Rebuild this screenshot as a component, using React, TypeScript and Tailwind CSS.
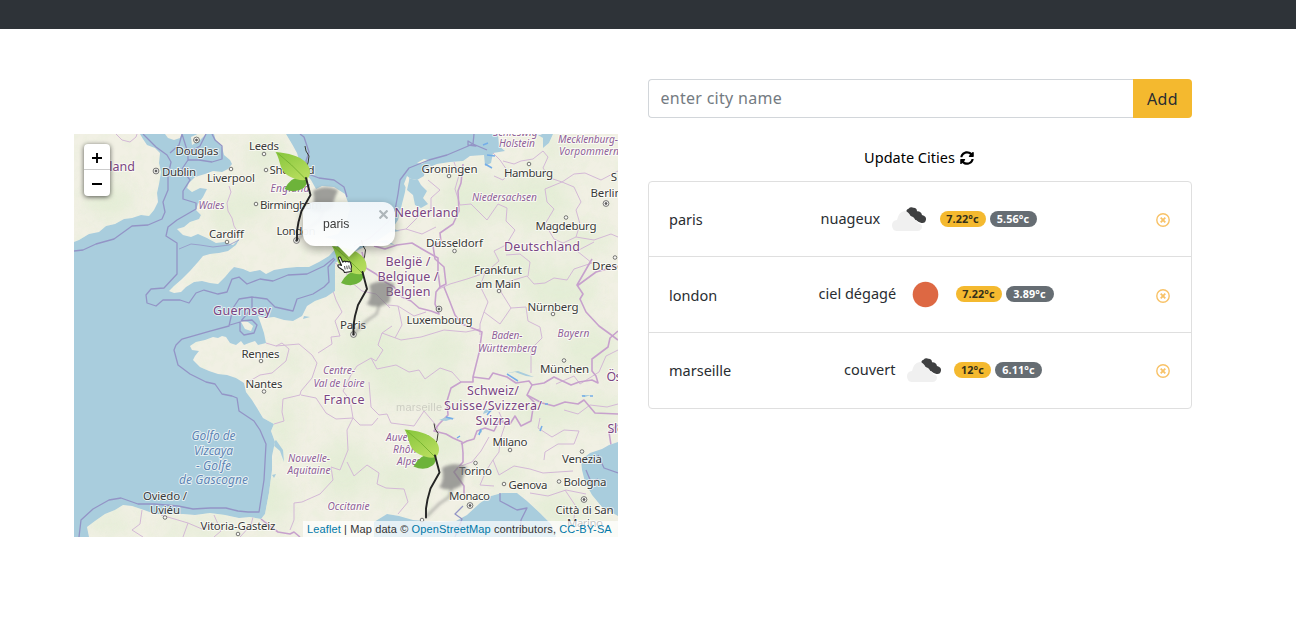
import React from "react";
import { FaSyncAlt } from "react-icons/fa";

type Kind = "city" | "country" | "region" | "sea";
type Label = [text: string, x: number, y: number, width: number, kind: Kind];

const labels: Label[] = [
  ["Douglas", 197, 155, 43, "city"],
  ["Leeds", 264, 150, 30, "city"],
  ["Dublin", 179, 176, 34, "city"],
  ["Liverpool", 231, 182, 48, "city"],
  ["Sheffield", 292, 174, 45, "city"],
  ["Birmingham", 291, 208.5, 62, "city"],
  ["Cardiff", 226.5, 237.5, 35, "city"],
  ["London", 296, 234.5, 39, "city"],
  ["Paris", 353, 329, 26, "city"],
  ["Rennes", 260.5, 357.5, 38, "city"],
  ["Nantes", 264, 388, 37, "city"],
  ["Oviedo /", 165, 500, 44, "city"],
  ["Uviéu", 165, 514, 30, "city"],
  ["Vitoria-Gasteiz", 238, 530, 75, "city"],
  ["Groningen", 449.5, 172.5, 56, "city"],
  ["Hamburg", 528.5, 176.5, 49, "city"],
  ["S", 614, 181, 6, "city"],
  ["Berlin", 606, 197, 31, "city"],
  ["Magdeburg", 566, 230, 61, "city"],
  ["Düsseldorf", 454.5, 247, 57, "city"],
  ["Frankfurt", 498, 274, 48, "city"],
  ["am Main", 498, 287.5, 45, "city"],
  ["Dresden", 615, 270, 46, "city"],
  ["Nürnberg", 553, 311, 51, "city"],
  ["Luxembourg", 439.5, 324, 66, "city"],
  ["München", 564.5, 373, 49, "city"],
  ["Milano", 510, 446, 35, "city"],
  ["Torino", 475.5, 475, 33, "city"],
  ["Monaco", 469.5, 500, 41, "city"],
  ["Genova", 528, 488.5, 39, "city"],
  ["Venezia", 582, 463, 40, "city"],
  ["Bologna", 585, 486, 43, "city"],
  ["Città di San", 584.5, 514, 58, "city"],
  ["Marino", 585, 527, 36, "city"],
  ["Ireland", 114, 171, 42, "country"],
  ["Guernsey", 242, 315, 58, "country"],
  ["Nederland", 426.5, 217, 64, "country"],
  ["België /", 408, 266, 45, "country"],
  ["Belgique /", 408, 281, 61, "country"],
  ["Belgien", 408, 296, 45, "country"],
  ["Deutschland", 542, 251, 76, "country"],
  ["France", 344, 404, 41, "country"],
  ["Schweiz/", 493, 395, 52, "country"],
  ["Suisse/Svizzera/", 493, 410, 98, "country"],
  ["Svizra", 493, 425, 35, "country"],
  ["Ös", 614, 381, 15, "country"],
  ["Slo", 616, 433, 17, "country"],
  ["Wales", 211.5, 209, 26, "region"],
  ["England", 290, 192, 39, "region"],
  ["Schleswig-", 517, 135.5, 48, "region"],
  ["Holstein", 517, 147, 36, "region"],
  ["Mecklenburg-", 588, 143, 60, "region"],
  ["Vorpommern", 589, 155, 60, "region"],
  ["Niedersachsen", 504.5, 201, 65, "region"],
  ["Baden-", 507, 339, 31, "region"],
  ["Württemberg", 507.5, 352, 59, "region"],
  ["Bayern", 573.5, 337, 32, "region"],
  ["Centre-", 339, 374, 32, "region"],
  ["Val de Loire", 339, 387, 51, "region"],
  ["Nouvelle-", 309, 461.5, 42, "region"],
  ["Aquitaine", 309, 474, 43, "region"],
  ["Auvergne-", 409, 441, 46, "region"],
  ["Rhône-", 409, 453, 32, "region"],
  ["Alpes", 409, 465, 24, "region"],
  ["Occitanie", 348.5, 510, 42, "region"],
  ["Golfo de", 213.5, 440, 44, "sea"],
  ["Vizcaya", 213.5, 455, 39, "sea"],
  ["- Golfe", 213.5, 469.5, 35, "sea"],
  ["de Gascogne", 213.5, 484, 69, "sea"],
];

const towns = [
  [264, 154], [231, 169], [266, 170], [256, 204], [227, 242], [261, 361], [264, 391.5],
  [165, 517.5], [238, 534], [449, 176], [529, 164], [566, 217.5], [454.5, 251], [615, 257.5],
  [499, 291], [553, 314], [564, 360.5], [510, 450], [475.5, 463], [504, 484], [559, 481.5],
  [582, 451.5], [422, 520],
];
const capitals = [[196.5, 140], [156, 171], [296.5, 240.5], [353.5, 334.5], [606, 203.5], [439, 309], [470, 505.5], [584, 499.5]];

const kindClass: Record<Kind, string> = {
  city: "fill-[#3a3a3a] text-[11.5px]",
  country: "fill-[#7a4583] text-[12.5px]",
  region: "fill-[#8f6099] text-[10.2px] italic",
  sea: "fill-[#5d84b5] text-[12px] italic",
};

const greens = [
  [250, 205, 20, 14], [265, 155, 18, 18], [225, 215, 14, 20], [215, 270, 16, 5], [110, 200, 22, 18], [288, 360, 16, 8],
  [282, 425, 12, 30], [270, 500, 22, 24], [375, 350, 35, 25], [400, 385, 30, 16], [345, 470, 26, 30], [400, 480, 26, 18],
  [440, 350, 24, 20], [470, 200, 30, 28], [535, 200, 35, 28], [465, 270, 24, 20], [510, 265, 32, 14], [560, 290, 36, 24],
  [590, 350, 30, 22], [520, 350, 15, 30], [445, 445, 20, 14], [545, 410, 36, 18], [600, 410, 18, 16], [505, 475, 26, 8],
  [560, 510, 30, 16], [585, 240, 26, 12], [560, 150, 24, 8], [445, 390, 14, 18], [110, 522, 20, 9], [200, 528, 40, 7], [345, 285, 12, 18],
];

function MapDrawing() {
  return (
    <svg className="block h-full w-full" viewBox="74 134 544 403" preserveAspectRatio="none" aria-hidden="true">
      <defs>
        <filter id="soft" x="-50%" y="-50%" width="200%" height="200%"><feGaussianBlur stdDeviation="9" /></filter>
        <filter id="relief" x="0" y="0" width="100%" height="100%">
          <feTurbulence type="fractalNoise" baseFrequency="0.09" numOctaves="3" seed="4" />
          <feColorMatrix values="0 0 0 0 .76  0 0 0 0 .86  0 0 0 0 .66  3 0 0 0 -1.35" />
        </filter>
        <filter id="shade" x="-50%" y="-50%" width="200%" height="200%"><feGaussianBlur stdDeviation="1.8" /></filter>
        <linearGradient id="leaf" x1="0" y1="0" x2="0.6" y2="1">
          <stop offset="0" stopColor="#86c53c" /><stop offset="1" stopColor="#b5dc5c" />
        </linearGradient>
        <g id="pin-shadow" filter="url(#shade)">
          <path d="M0 0L13 -13 23 -20 26 -29" fill="none" stroke="#777" strokeWidth="2.500" opacity=".5" />
          <path d="M16 -49Q28 -56 41 -50L37 -40 36 -32Q24 -24 13 -30 19 -36 16 -49Z" fill="#777" opacity=".68" />
        </g>
        <g id="pin">
          <path d="M8.500 -94L9.500 -89 12.500 -84 11.500 -77 9 -72" fill="none" stroke="#3a3a34" strokeWidth="1" />
          <path d="M-12 -51Q-1 -46 7 -52 11 -55 11 -63 -4 -66 -12 -51Z" fill="#6db33a" />
          <path d="M-21 -88C-8 -87 3 -84 9 -78 16 -71 14 -62 9 -60 0 -59 -11 -64 -14 -70 -17 -75 -17 -82 -21 -88Z" fill="url(#leaf)" />
          <path d="M-19 -87Q-5 -76 9 -61" fill="none" stroke="#74b12f" strokeWidth=".9" />
          <path d="M9.500 -62L14 -45 5 -29 2 -18 .500 -9 .500 0" fill="none" stroke="#252525" strokeWidth="1.900" strokeLinejoin="round" strokeLinecap="round" />
        </g>
        <clipPath id="land">
          <path d="M74 134L140 134 143 139 147 145 155 148 160 153 159 163 161 172 159 184 157 193 158 202 154 210 149 216 141 215 132 218 124 219 115 224 106 226 99 232 89 234 79 240 74 242Z" />
          <path d="M165 134L182 134 180 138 174 140 168 138ZM191 137L202 132 206 134 200 140 192 145Z" />
          <path d="M214 134L216 141 222 147 224 155 230 160 232 164 228 169 222 172 213 171 205 174 195 177 189 183 187 188 192 192 200 188 207 189 203 197 198 204 196 210 201 215 199 219 190 222 184 227 177 229 183 235 191 237 198 234 207 238 216 243 224 242 233 245 240 238 236 245 228 251 219 253 210 254 203 256 198 262 190 271 182 279 174 286 169 291 174 293 181 292 186 287 194 282 202 281 210 283 218 284 225 277 230 271 234 267 243 269 250 272 260 270 266 274 274 270 286 268 297 267 309 267 319 262 329 256 337 247 336 240 325 237 338 234 346 222 350 208 345 194 334 187 322 186 316 189 311 180 306 174 301 166 297 153 292 144 286 134Z" />
          <path d="M335 263L335 291 326 297 315 301 307 306 302 316 293 321 284 320 274 317 265 318 258 316 261 324 264 333 266 343 258 345 255 341 249 343 244 345 241 341 236 345 230 343 226 337 222 336 218 338 213 337 205 340 196 342 190 346 192 350 199 351 195 356 193 360 200 367 209 371 218 374 227 375 236 378 244 383 246 392 252 400 257 408 263 418 274 424 271 431 275 442 272 456 272 470 269 493 265 514 261 519 250 517 239 518 225 515 210 513 195 515 183 514 168 514 155 514 144 510 132 506 123 505 115 510 105 514 95 521 87 527 89 537 374 537 374 522 387 514 399 516 413 520 425 521 441 522 456 521 467 515 480 503 491 496 502 493 517 493 527 501 540 513 551 524 556 537 618 537 618 516 602 507 592 495 585 482 582 470 581 460 590 453 602 449 609 445 618 442 618 134 553 134 549 143 543 148 543 138 536 134 498 134 499 146 505 151 493 153 491 163 485 166 484 155 470 156 463 161 450 162 437 164 425 169 424 176 417 180 407 178 405 192 402 204 398 220 390 232 377 241 360 249 346 257Z" />
          <path d="M404 184L407 176 411 179 406 188ZM417 163L424 159 428 160 422 164ZM240 320L248 322 253 326 251 331 245 329Z" />
        </clipPath>
      </defs>
      <rect x="74" y="134" width="544" height="403" fill="#a9cddd" />
      <g clipPath="url(#land)">
        <rect x="74" y="134" width="544" height="403" fill="#f1f0e4" />
        <g filter="url(#soft)" fill="#dfecd0" opacity=".65">
          {greens.map(([x, y, rx, ry], i) => <ellipse key={i} cx={x} cy={y} rx={rx} ry={ry} />)}
        </g>
        <rect x="74" y="134" width="544" height="403" filter="url(#relief)" opacity=".28" />
        <g fill="none" stroke="#d3b8d6" strokeWidth="1" strokeLinejoin="round">
          <path d="M116 134L122 140 130 142 136 137 137 134M143 134L151 142 158 143 163 148M229 186L231 192 227 203 228 211 232 218 234 226 237 231 239 236" />
          <path d="M266 343L276 346 282 343 289 349 286 361 272 373 260 375 248 382M276 346L299 344 312 355 317 363 312 378 301 391 300 395 283 399 282 412 284 421 274 424M301 395L316 398 326 413 336 419 353 418 350 400 343 391 351 375 357 366 371 358 376 361 383 350 378 345 382 333 392 326M333 291L336 300 342 312 335 321 340 336 331 337 332 344 318 353" />
          <path d="M371 358L377 369 396 365 409 372 419 370 425 379 440 368 452 372 461 382M369 382L371 407 379 415 387 414 391 423 414 426 424 411 435 424 438 430M353 418L347 430 348 450 340 470 331 467 333 480 320 494 302 502 294 503 294 520 290 530M347 462L354 476 367 465 379 473 377 484 386 488 404 489 408 502 398 514M353 418L360 425 372 425 378 418" />
          <path d="M335 263L344 269 351 282 362 291 376 294 390 308M388 305L398 306 402 325 395 338M398 306L414 316 426 312M382 333L401 340 421 337 444 330 466 332 480 329" />
          <path d="M142 510L140 524 132 530 143 537M161 515L188 523 183 537M214 515L221 531 214 537M253 517L251 525 240 537M188 523L202 529 214 523" />
          <path d="M370 234L389 232 406 229 422 234 436 227M406 229L420 215 431 209 431 198 440 190 428 180M454 162L459 175 455 189 460 205 471 204 487 220 498 204 507 208 506 221 515 230 506 245 494 251 499 261 485 273 467 279 450 284 439 289" />
          <path d="M493 153L500 160 509 173 503 180 494 176M503 161L514 164 521 161 533 159 543 151 548 157 543 168 550 178 562 182 574 174 585 173 601 180 618 171M562 182L545 189 547 202 554 209 545 224 554 239 563 243 576 237 580 224 576 210 581 202 574 187 562 182M576 237L594 240 611 234 618 237" />
          <path d="M485 273L480 286 488 302 484 312 500 324 511 308 526 307 528 321 540 327 542 338 531 349 531 373M511 308L501 292 500 284 527 276 534 284 545 283 554 278 567 280 574 269 592 263 577 251 594 242M484 312L480 324 480 335M528 276L530 262 520 254 506 255" />
          <path d="M556 384L574 376 580 384 599 372 606 356 618 350M564 410L578 414 590 405 607 407 618 404M540 418L538 428 552 437 564 430 579 431 574 444 558 444 545 452 544 460M499 412L505 425 500 440 499 452 493 460 499 475 514 466 530 469 543 473 573 471M461 466L472 462 481 451 489 437M493 460L486 471 480 485 494 486M530 493L548 496 566 490 586 494M565 490L575 505 574 520 590 530" />
        </g>
        <g fill="none" stroke="#c7a1cd" strokeWidth="1.6" strokeLinejoin="round">
          <path d="M374 246L385 249 397 245 412 243 422 249 429 253 438 258 438 272 440 287 436 292 435 304 439 314 431 311 419 308 411 301 402 297 394 287 385 282 376 274 366 268 362 252" />
          <path d="M440 287L446 284 444 267 435 259 433 246 441 242 440 233 453 224 459 211 458 191 461 183 463 164M444 287L450 302 455 315 462 324 477 330 482 332 479 353 473 377 473 382 461 382 451 388 447 401 448 415 439 424 434 431 446 434 453 438 462 442 463 453 463 462 454 472 464 486 464 496" />
          <path d="M473 377L489 379 493 373 507 377 516 383 529 381 532 385 527 395 534 402 531 421 521 426 515 416 510 424 499 421 494 431 485 428 477 431 474 439 467 441 461 444" />
          <path d="M532 385L544 383 554 377 571 385 579 382 592 380 598 383 596 376 592 371 592 359 608 347 610 338 618 331M592 259L577 285 583 294 580 299 586 312 599 326 610 334 618 340M577 286L596 272 618 266M527 395L542 403 554 406 565 402 578 404 584 400 595 413 618 414M618 425L609 432 611 445" />
          <path d="M261 519L266 523 278 532 290 534 294 532 300 537" />
        </g>
        <g fill="#a9cddd">
          <path d="M410 172L417 178 421 185 427 191 423 198 428 204 421 208 415 205 413 195 407 190 409 181ZM534 377L518 371 507 373 515 372 526 376ZM439 420L447 417 455 418 446 421ZM483 414L492 411 485 409ZM477 435L482 428 482 432ZM581 395L591 395 585 397Z" />
          <path d="M276 440L283 450 284 462 280 451 272 444ZM272 475L276 474 274 478ZM376 242L386 240 395 245 384 243ZM391 228L400 231 392 232ZM304 316L310 317 303 319Z" />
        </g>
      </g>
      <g fill="none" stroke="#9394c6" strokeWidth="1.300" strokeLinejoin="round">
        <path d="M74 251L83 250 96 244 114 239 132 226 148 225 162 219 165 212 163 202 168 190 168 176 171 162 167 155 156 147 149 140 143 134M182 134L179 145 170 153M182 134L188 153 188 160 182 169 190 180 183 191 183 199 196 203 196 209 177 220 168 227 166 236 177 243 177 274 164 288 151 289 146 295 147 303 156 306 163 300 180 300 189 303 196 293 204 290 218 294 227 292 232 279 239 277 247 284 260 279 273 281 288 275 307 274 324 266 334 258" />
        <path d="M188 153L200 146 206 134M212 134L215 140 222 146 222 159 212 162 199 160 188 160M300 134L304 137 309 152 306 161 308 174 319 178 334 180 344 187 347 197M182 339L210 331 229 326 233 308 239 299 252 297 267 299 275 307 293 311 297 299 313 294 324 287 329 282 328 267 335 259M252 297L252 308 241 321 252 320 257 325 254 333 244 335 240 331 240 322 230 325M182 339L176 345 174 350 178 365 190 374 206 382 215 384 222 394 232 396 237 398 239 411 254 421 260 430 266 444 264 480 259 512 248 512 238 511 226 508 210 508 193 509 178 506 154 504 138 504 121 498 109 500 93 509 81 520 79 537" />
        <path d="M179 249L191 244 200 245 213 247 229 245 239 240" strokeWidth=".8" />
        <path d="M474 134L473 144 447 155 429 160 409 168 400 180 398 194 395 210 388 222 370 238 354 246M468 141L476 146 468 145ZM473 144L487 150M455 537L462 519 455 514 463 506M500 493L500 501 517 510 527 508 521 520 520 537M598 455L604 468 618 473M586 470L591 482 598 479" />
      </g>
      <g fill="none" stroke="#74ade8" strokeWidth="1.500">
        <path d="M483 145L488 143M487 155L495 156M485 164L492 168M507 374L518 381M446 417L453 419M457 438L460 436M487 415L492 409M479 435L481 429M545 404L548 404M582 396L585 396M590 396L593 396M542 426L540 431" />
      </g>
      <g fill="#f8f8f4" stroke="#555" strokeWidth=".8">
        {towns.map(([x, y], i) => <circle key={i} cx={x} cy={y} r="1.8" />)}
        {capitals.map(([x, y], i) => (
          <g key={i}><circle cx={x} cy={y} r="2.900" /><circle cx={x} cy={y} r="1" fill="#555" /></g>
        ))}
      </g>
      <g className="font-['Noto_Sans',sans-serif]" textAnchor="middle" stroke="#fffffc" strokeOpacity=".7" strokeWidth="2" strokeLinejoin="round" paintOrder="stroke">
        {labels.map(([text, x, y, width, kind]) => (
          <text key={text} x={x} y={y} textLength={width} className={kindClass[kind]}>{text}</text>
        ))}
      </g>
      <text x="419" y="410.500" textLength="46" textAnchor="middle" className="fill-[#777] font-['Liberation_Sans',sans-serif] text-[11px]" opacity=".28">marseille</text>
      <use href="#pin-shadow" x="297" y="240" />
      <use href="#pin-shadow" x="353.500" y="334" />
      <use href="#pin-shadow" x="426" y="517" />
      <use href="#pin" x="296.500" y="240" />
      <use href="#pin" x="353" y="334" />
      <use href="#pin" x="425.500" y="517.500" />
    </svg>
  );
}

function HandCursor() {
  return (
    <svg className="absolute left-[263px] top-[122px] h-[17px] w-[16px]" viewBox="0 0 16 17">
      <path d="M4.500 9.500L1.500 2.500C1 .8 3 .3 3.700 1.800L5.800 6.200 6.500 5.500Q8 4.500 8.700 6 10 4.600 11.200 6 12.600 5 13.600 7L14.500 10.500 14 13 14.500 15.500 7.500 16.500 6.500 14.500 2 11.500Q.2 10 1.200 9 2 8.200 4.500 9.500Z" fill="#fff" stroke="#222" strokeWidth="1.100" strokeLinejoin="round" />
      <path d="M7.500 10L8.200 13.500M9.700 9.700L10.300 13.200M11.800 9.400L12.300 12.800" stroke="#222" strokeWidth=".8" />
    </svg>
  );
}

function WeatherMap() {
  return (
    <div className="relative h-[403px] w-[544px] overflow-hidden">
      <MapDrawing />
      <div className="absolute left-[10px] top-[10px] w-[26px] overflow-hidden rounded-[4px] bg-white shadow-[0_1px_5px_rgba(0,0,0,0.65)]">
        <button aria-label="Zoom in" className="flex h-[26px] w-full items-center justify-center border-b border-[#ccc] pt-[2px]">
          <svg viewBox="0 0 12 12" className="h-3 w-3"><path d="M1 6H11M6 1V11" stroke="#000" strokeWidth="1.900" /></svg>
        </button>
        <button aria-label="Zoom out" className="flex h-[26px] w-full items-center justify-center pt-[2px]">
          <svg viewBox="0 0 12 12" className="h-3 w-3"><path d="M1 6H11" stroke="#000" strokeWidth="1.900" /></svg>
        </button>
      </div>
      <div className="absolute left-[229px] top-[68px] h-[56px] w-[92px] opacity-95 drop-shadow-[0_3px_5px_rgba(0,0,0,0.35)]">
        <svg viewBox="0 0 24 12" className="absolute left-[34px] top-[43px] h-[12px] w-[24px]"><path d="M0 0H24L12 12Z" fill="#fff" /></svg>
        <div className="relative h-[44px] rounded-[12px] bg-gradient-to-b from-[#f3f8fb] to-white pl-[20px] pt-[15px] font-['Liberation_Sans',sans-serif] text-[12.2px] leading-[15px] text-[#333]">
          paris
          <svg viewBox="0 0 9 9" className="absolute right-[7px] top-[8px] h-[9px] w-[9px]"><path d="M.5 .5L8.500 8.500M8.500 .5L.5 8.500" stroke="#afb5b9" strokeWidth="2.200" /></svg>
        </div>
      </div>
      <HandCursor />
      <div className="absolute bottom-0 right-0 h-[16px] w-[315px] whitespace-nowrap bg-white/70 pl-[4px] font-['Liberation_Sans',sans-serif] text-[11px] leading-[16px] tracking-[0.12px] text-[#333]">
        <span className="text-[#0078a8]">Leaflet</span> | Map data © <span className="text-[#0078a8]">OpenStreetMap</span> contributors, <span className="text-[#0078a8]">CC-BY-SA</span>
      </div>
    </div>
  );
}

function WeatherIcon({ sky }: { sky: "clouds" | "clear" }) {
  return (
    <svg viewBox="0 0 50 50" className="mx-[4.500px] h-[50px] w-[50px] shrink-0">
      {sky === "clear" ? (
        <circle cx="24.500" cy="25.500" r="12.800" fill="#dd6843" />
      ) : (
        <g transform="translate(-1.500 4)">
          <path d="M23 14Q22.500 11.500 25 10.800 27 8.500 30 9.800 33.500 10 33.500 13.300 37.500 13 38.500 17 43 18 42.500 21.500 42 25.500 38 25 33 24 23 14Z" fill="#3f4041" />
          <path d="M13 33Q8.500 32.500 8.500 27 8.700 22.500 13.500 22 15 14 21 13 25.500 13.500 27 18.500 30.500 18 31.500 22 33.500 21.500 35 25.500 38.500 25.500 38.500 29 38 32.700 34 33Z" fill="#f0f0f0" />
        </g>
      )}
    </svg>
  );
}

interface City { name: string; sky: "clouds" | "clear"; label: string; max: string; min: string; nameWidth: string; labelWidth: string; maxWidth: string; minWidth: string }

const cities: City[] = [
  { name: "paris", sky: "clouds", label: "nuageux", max: "7.22°c", min: "5.56°c", nameWidth: "w-[32px]", labelWidth: "w-[60px]", maxWidth: "w-[46px]", minWidth: "w-[47px]" },
  { name: "london", sky: "clear", label: "ciel dégagé", max: "7.22°c", min: "3.89°c", nameWidth: "w-[47px]", labelWidth: "w-[78px]", maxWidth: "w-[46px]", minWidth: "w-[48px]" },
  { name: "marseille", sky: "clouds", label: "couvert", max: "12°c", min: "6.11°c", nameWidth: "w-[61px]", labelWidth: "w-[51px]", maxWidth: "w-[37px]", minWidth: "w-[47px]" },
];

function CityRow({ city }: { city: City }) {
  const badge = "flex h-4 items-center justify-center rounded-full text-[10.8px] font-bold tracking-[0.15px]";
  return (
    <li className="flex h-[75.400px] items-center justify-between border-b border-[#dfdfdf] pl-5 pr-[21px] last:h-[75px] last:border-b-0">
      <span className={`${city.nameWidth} whitespace-nowrap pt-[2px]`}>{city.name}</span>
      <div className="flex items-center pb-px">
        <span className={`${city.labelWidth} whitespace-nowrap`}>{city.label}</span>
        <WeatherIcon sky={city.sky} />
        <span className={`${badge} ${city.maxWidth} bg-[#f4b92f] text-[#343019]`}>{city.max}</span>
        <span className={`${badge} ${city.minWidth} ml-1 bg-[#666d73] text-white`}>{city.min}</span>
      </div>
      <button aria-label={`Remove ${city.name}`} className="pt-[2px]">
        <svg viewBox="0 0 14 14" className="h-[14px] w-[14px]" fill="none" stroke="#f8c267">
          <circle cx="7" cy="7" r="6.200" strokeWidth="1.400" /><path d="M4.700 4.700L9.300 9.300M9.300 4.700L4.700 9.300" strokeWidth="1.800" />
        </svg>
      </button>
    </li>
  );
}

export default function App() {
  return (
    <div className="h-[641px] overflow-hidden bg-white font-['Noto_Sans',sans-serif] text-[14.500px] text-[#292d31]">
      <header className="h-[29px] bg-[#2e3338]" />
      <main className="flex gap-[30px] pl-[74px]">
        <section className="pt-[105px]"><WeatherMap /></section>
        <section className="w-[544px] pt-[50px]">
          <form className="flex h-[39px]" onSubmit={(e) => e.preventDefault()}>
            <input className="min-w-0 flex-1 rounded-l-[4px] border border-r-0 border-[#d2d6da] pb-px pl-[11.500px] text-[16px] tracking-[0.28px] outline-none placeholder:text-[#747b82]" placeholder="enter city name" />
            <button className="w-[59px] rounded-r-[4px] bg-[#f4b92f] text-[16px] tracking-[0.3px] text-[#292d31]">Add</button>
          </form>
          <button className="mt-[30px] flex h-5 w-full items-center justify-center gap-[5px] pr-[2px] text-[14.500px] text-black">
            Update Cities <FaSyncAlt className="h-[14px] w-[14px]" />
          </button>
          <ul className="mt-[13px] rounded-[4px] border border-[#dfdfdf]">
            {cities.map((city) => <CityRow key={city.name} city={city} />)}
          </ul>
        </section>
      </main>
    </div>
  );
}
